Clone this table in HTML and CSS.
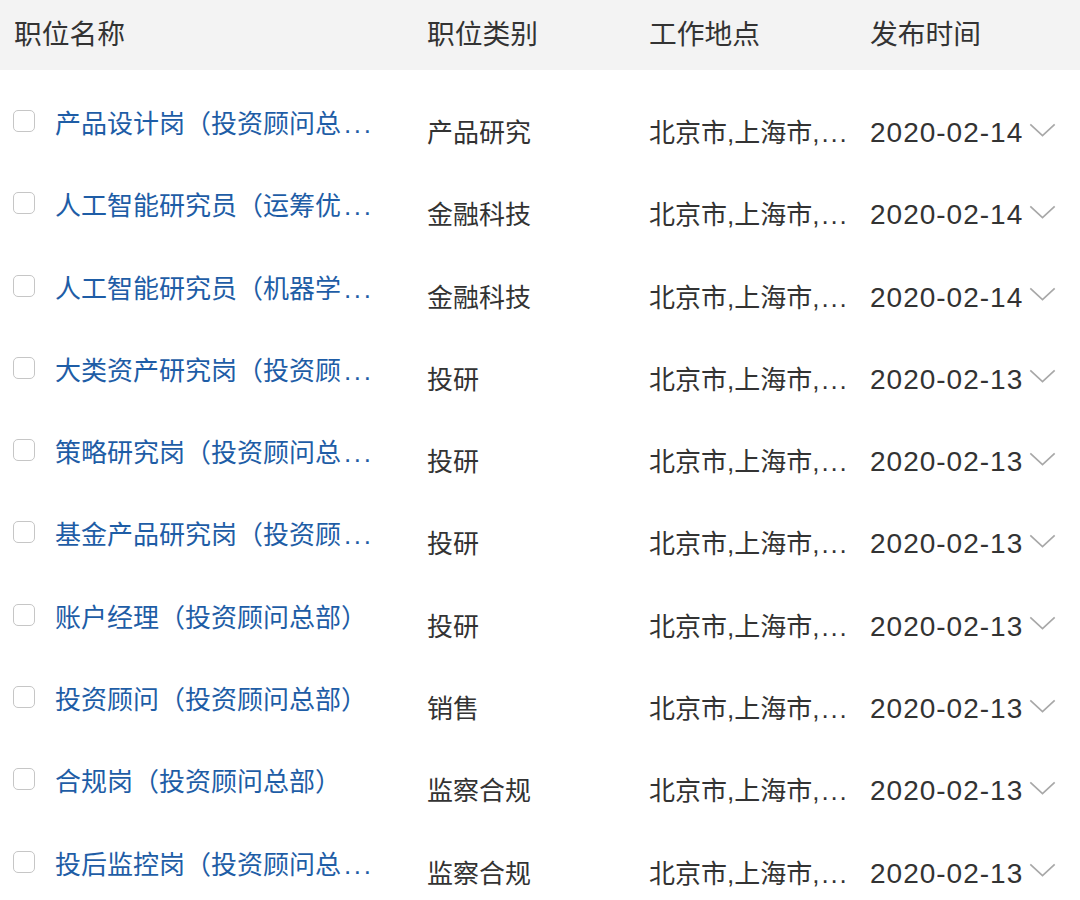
FILE: index.html
```html
<!DOCTYPE html>
<html lang="zh-CN">
<head>
<meta charset="utf-8">
<link rel="stylesheet" href="styles.css">
</head>
<body>
<div class="table">
  <div class="head">
    <div class="c1">职位名称</div>
    <div class="c2">职位类别</div>
    <div class="c3">工作地点</div>
    <div class="c4">发布时间</div>
  </div>
  <div class="body">
    <div class="row"><div class="c1"><span class="box"></span><span class="name">产品设计岗（投资顾问总<span class="dots">...</span></span></div><div class="c2">产品研究</div><div class="c3">北京市,上海市,<span class="dots">...</span></div><div class="c4"><span class="date">2020-02-14</span><svg class="chev" viewBox="0 0 28 16"><path d="M1 1.5 L14 13.5 L27 1.5"/></svg></div></div>
    <div class="row"><div class="c1"><span class="box"></span><span class="name">人工智能研究员（运筹优<span class="dots">...</span></span></div><div class="c2">金融科技</div><div class="c3">北京市,上海市,<span class="dots">...</span></div><div class="c4"><span class="date">2020-02-14</span><svg class="chev" viewBox="0 0 28 16"><path d="M1 1.5 L14 13.5 L27 1.5"/></svg></div></div>
    <div class="row"><div class="c1"><span class="box"></span><span class="name">人工智能研究员（机器学<span class="dots">...</span></span></div><div class="c2">金融科技</div><div class="c3">北京市,上海市,<span class="dots">...</span></div><div class="c4"><span class="date">2020-02-14</span><svg class="chev" viewBox="0 0 28 16"><path d="M1 1.5 L14 13.5 L27 1.5"/></svg></div></div>
    <div class="row"><div class="c1"><span class="box"></span><span class="name">大类资产研究岗（投资顾<span class="dots">...</span></span></div><div class="c2">投研</div><div class="c3">北京市,上海市,<span class="dots">...</span></div><div class="c4"><span class="date">2020-02-13</span><svg class="chev" viewBox="0 0 28 16"><path d="M1 1.5 L14 13.5 L27 1.5"/></svg></div></div>
    <div class="row"><div class="c1"><span class="box"></span><span class="name">策略研究岗（投资顾问总<span class="dots">...</span></span></div><div class="c2">投研</div><div class="c3">北京市,上海市,<span class="dots">...</span></div><div class="c4"><span class="date">2020-02-13</span><svg class="chev" viewBox="0 0 28 16"><path d="M1 1.5 L14 13.5 L27 1.5"/></svg></div></div>
    <div class="row"><div class="c1"><span class="box"></span><span class="name">基金产品研究岗（投资顾<span class="dots">...</span></span></div><div class="c2">投研</div><div class="c3">北京市,上海市,<span class="dots">...</span></div><div class="c4"><span class="date">2020-02-13</span><svg class="chev" viewBox="0 0 28 16"><path d="M1 1.5 L14 13.5 L27 1.5"/></svg></div></div>
    <div class="row"><div class="c1"><span class="box"></span><span class="name">账户经理（投资顾问总部）</span></div><div class="c2">投研</div><div class="c3">北京市,上海市,<span class="dots">...</span></div><div class="c4"><span class="date">2020-02-13</span><svg class="chev" viewBox="0 0 28 16"><path d="M1 1.5 L14 13.5 L27 1.5"/></svg></div></div>
    <div class="row"><div class="c1"><span class="box"></span><span class="name">投资顾问（投资顾问总部）</span></div><div class="c2">销售</div><div class="c3">北京市,上海市,<span class="dots">...</span></div><div class="c4"><span class="date">2020-02-13</span><svg class="chev" viewBox="0 0 28 16"><path d="M1 1.5 L14 13.5 L27 1.5"/></svg></div></div>
    <div class="row"><div class="c1"><span class="box"></span><span class="name">合规岗（投资顾问总部）</span></div><div class="c2">监察合规</div><div class="c3">北京市,上海市,<span class="dots">...</span></div><div class="c4"><span class="date">2020-02-13</span><svg class="chev" viewBox="0 0 28 16"><path d="M1 1.5 L14 13.5 L27 1.5"/></svg></div></div>
    <div class="row"><div class="c1"><span class="box"></span><span class="name">投后监控岗（投资顾问总<span class="dots">...</span></span></div><div class="c2">监察合规</div><div class="c3">北京市,上海市,<span class="dots">...</span></div><div class="c4"><span class="date">2020-02-13</span><svg class="chev" viewBox="0 0 28 16"><path d="M1 1.5 L14 13.5 L27 1.5"/></svg></div></div>
  </div>
</div>
</body>
</html>
```

FILE: styles.css
```css
html, body {
  margin: 0;
  padding: 0;
  background: #fff;
}
body {
  font-family: "Liberation Sans", "Noto Sans CJK SC", sans-serif;
  color: #333;
  width: 1080px;
  height: 900px;
  overflow: hidden;
}
.table {
  display: flex;
  flex-direction: column;
}
.head, .row {
  display: grid;
  grid-template-columns: 427px 222px 221px 1fr;
}
.head {
  height: 70px;
  background: #f3f3f3;
  align-items: center;
  font-size: 27.75px;
  color: #333;
}
.head .c1 {
  padding-left: 14px;
}
.head > div {
  line-height: 34px;
}
.body {
  display: flex;
  flex-direction: column;
  padding-top: 39px;
}
.row {
  height: 82.3px;
  align-items: start;
  font-size: 26px;
  line-height: 30px;
}
.row .c1 {
  display: flex;
  align-items: center;
  padding-left: 13px;
}
.box {
  width: 20px;
  height: 20px;
  border: 1px solid #c6c6c6;
  border-radius: 5px;
  box-sizing: content-box;
  background: #fff;
  margin-right: 20px;
  margin-top: -6px;
  flex: none;
}
.name {
  color: #1e5da6;
  font-size: 26px;
  white-space: nowrap;
}
.dots {
  letter-spacing: 2.6px;
  margin-left: 3px;
}
.c3 .dots {
  letter-spacing: 1.8px;
  margin-left: 2px;
}
.row .c2, .row .c3, .row .c4 {
  margin-top: 9px;
  white-space: nowrap;
}
.row .c4 {
  display: flex;
  align-items: center;
}
.date {
  font-size: 28px;
  letter-spacing: 1px;
}
.chev {
  width: 27px;
  height: 15px;
  margin-left: 6px;
  margin-top: -6px;
  fill: none;
  stroke: #a8a8a8;
  stroke-width: 1.8;
}
```
